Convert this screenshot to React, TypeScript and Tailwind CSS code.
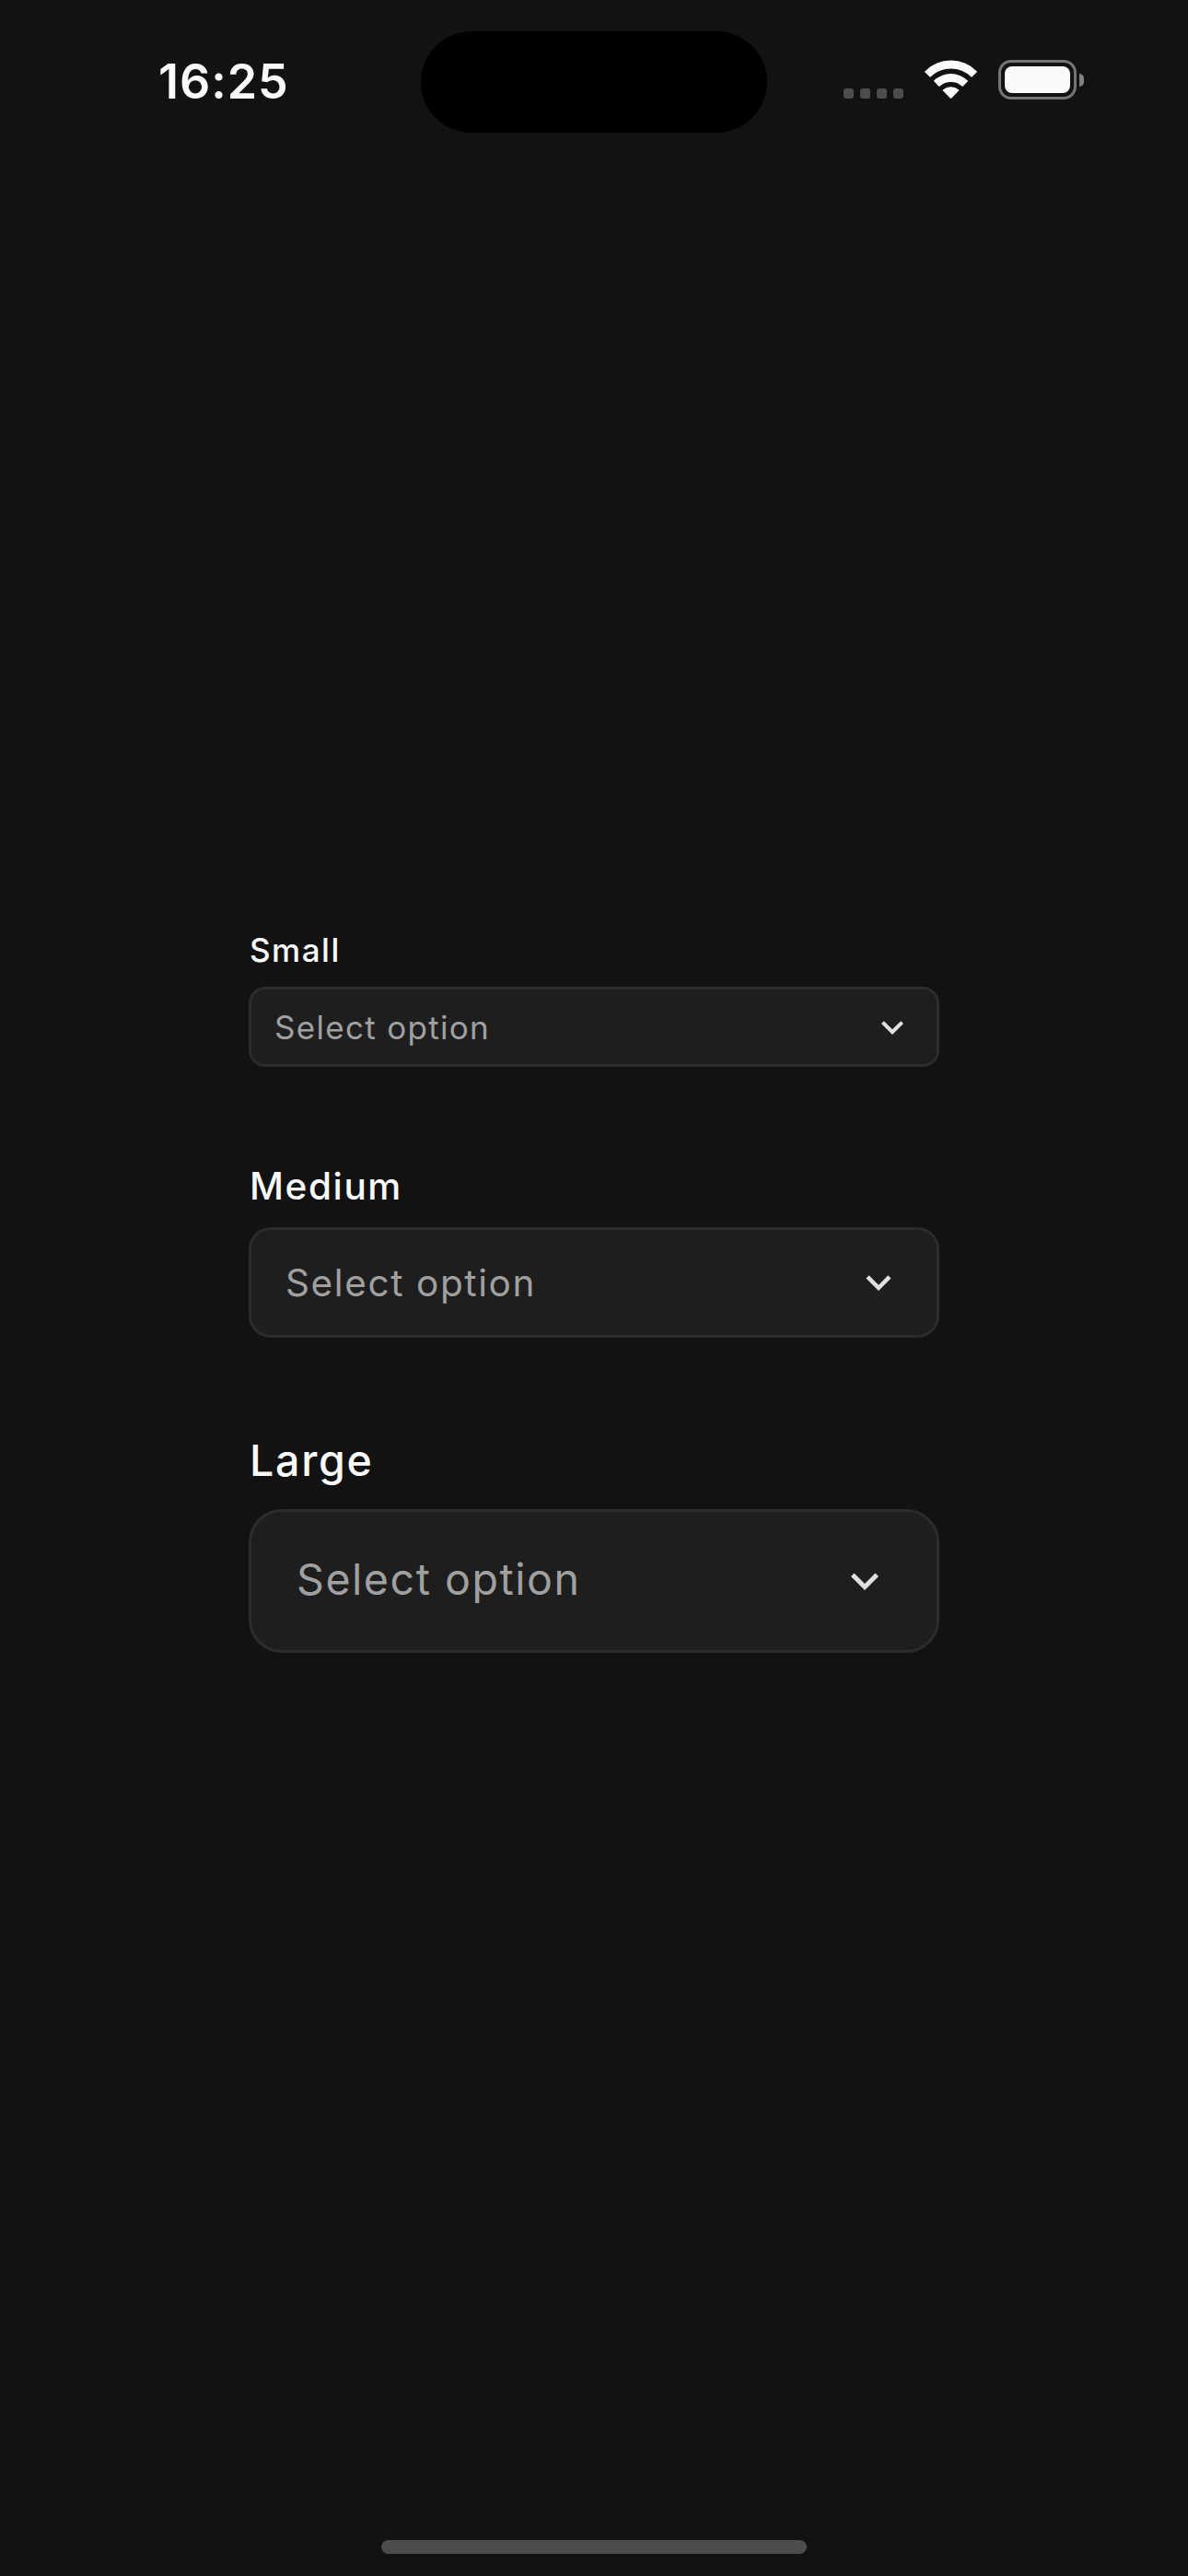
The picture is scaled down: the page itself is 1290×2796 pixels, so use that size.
import clsx from 'clsx'


type SelectSize = 'small' | 'medium' | 'large'

const labelStyles: Record<SelectSize, string> = {
    small: 'h-12 pl-px text-[35px] leading-[46px] tracking-[1.5px] mb-[15px]',
    medium: 'h-[54px] pl-px text-[40.5px] leading-[56px] tracking-[1.6px] mb-[18px]',
    large: 'h-[63px] pl-px text-[46.5px] leading-[63px] tracking-[1.75px] mb-[21px]',
}

const fieldStyles: Record<SelectSize, string> = {
    small: 'h-[87px] px-6 rounded-[18px]',
    medium: 'h-[120px] px-9 rounded-[24px]',
    large: 'h-[156px] px-12 rounded-[36px]',
}

const placeholderStyles: Record<SelectSize, string> = {
    small: 'pt-0.5 text-[35px] tracking-[1.3px]',
    medium: 'pt-0.5 text-[40.5px] tracking-[1.6px]',
    large: 'pb-[3px] text-[46.5px] tracking-[1.55px]',
}

const iconStyles: Record<SelectSize, string> = {
    small: 'size-12',
    medium: 'size-[54px]',
    large: 'size-[60px]',
}


function ChevronIcon({ className }: { className?: string }) {
    return <svg viewBox="0 0 24 24" fill="currentColor" className={className}>
        <path d="M7.41 8.59 12 13.17l4.59-4.58L18 10l-6 6-6-6 1.41-1.41z" />
    </svg>
}


function Select({ label, size }: { label: string, size: SelectSize }) {
    return <div className="flex flex-col">
        <label className={clsx('font-[450] text-[#fafafa]', labelStyles[size])}>
            {label}
        </label>
        <button
            type="button"
            className={clsx(
                'flex items-center justify-between border-3 border-[#2c2c2c] bg-[#1e1e1e] text-[#a0a0a0]',
                fieldStyles[size],
            )}
        >
            <span className={clsx('pl-px leading-none', placeholderStyles[size])}>
                Select option
            </span>
            <ChevronIcon className={clsx('text-[#e0e0e0]', iconStyles[size])} />
        </button>
    </div>
}


function WifiIcon() {
    return <svg width="57" height="42" viewBox="0 0 57 42" fill="#fafafa">
        <path d="M.5 13.6a.9.9 0 0 1 0-1.4a39.6 39.6 0 0 1 56 0a.9.9 0 0 1 0 1.4L51.7 18.3a1 1 0 0 1-1.4 0a31.5 31.5 0 0 0-43.6 0a1 1 0 0 1-1.4 0z" />
        <path d="M10.4 23.6a.9.9 0 0 1 0-1.4a26.4 26.4 0 0 1 36.2 0a.9.9 0 0 1 0 1.4l-4.8 4.8a1 1 0 0 1-1.4 0a18 18 0 0 0-23.8 0a1 1 0 0 1-1.4 0z" />
        <path d="M20.2 33.8a.9.9 0 0 1 0-1.5a13.2 13.2 0 0 1 16.6 0a.9.9 0 0 1 0 1.5l-7.5 7.6a1.1 1.1 0 0 1-1.6 0z" />
    </svg>
}


function StatusBar() {
    return <header className="flex h-[178px] shrink-0 justify-between pl-[172px] pr-[113px] pt-[34px]">
        <time className="mt-[23px] h-16 w-[285px] text-[52px] leading-[64px] font-semibold tracking-[0.95px] text-[#fafafa]">
            16:25
        </time>

        <div className="h-[110px] w-[376px] rounded-full bg-black" />

        <div className="mt-[31px] flex h-[43px] w-[344px] items-start justify-end gap-[23px]">
            <div className="mt-[31px] flex gap-[7px]">
                {[0, 1, 2, 3].map(dot => (
                    <span key={dot} className="size-[11px] rounded-[3px] bg-[#4c4c4c]" />
                ))}
            </div>
            <WifiIcon />
            <div className="flex items-center gap-[3px]">
                <div className="h-[43px] w-[85px] rounded-[14px] border-3 border-[#757575] p-1">
                    <div className="h-[29px] w-[71px] rounded-[8px] bg-[#fafafa]" />
                </div>
                <div className="h-[14px] w-[5px] rounded-r-full bg-[#808080]" />
            </div>
        </div>
    </header>
}


export default function App() {
    return <div className="flex h-[2796px] w-[1290px] flex-col bg-[#121212] font-[Inter,sans-serif]">
        <StatusBar />

        <main className="mx-auto mt-[830px] flex w-[750px] flex-1 flex-col gap-[102px]">
            <Select label="Small" size="small" />
            <Select label="Medium" size="medium" />
            <Select label="Large" size="large" />
        </main>

        <div className="mx-auto mb-6 h-[15px] w-[462px] shrink-0 rounded-full bg-[#4c4c4c]" />
    </div>
}
